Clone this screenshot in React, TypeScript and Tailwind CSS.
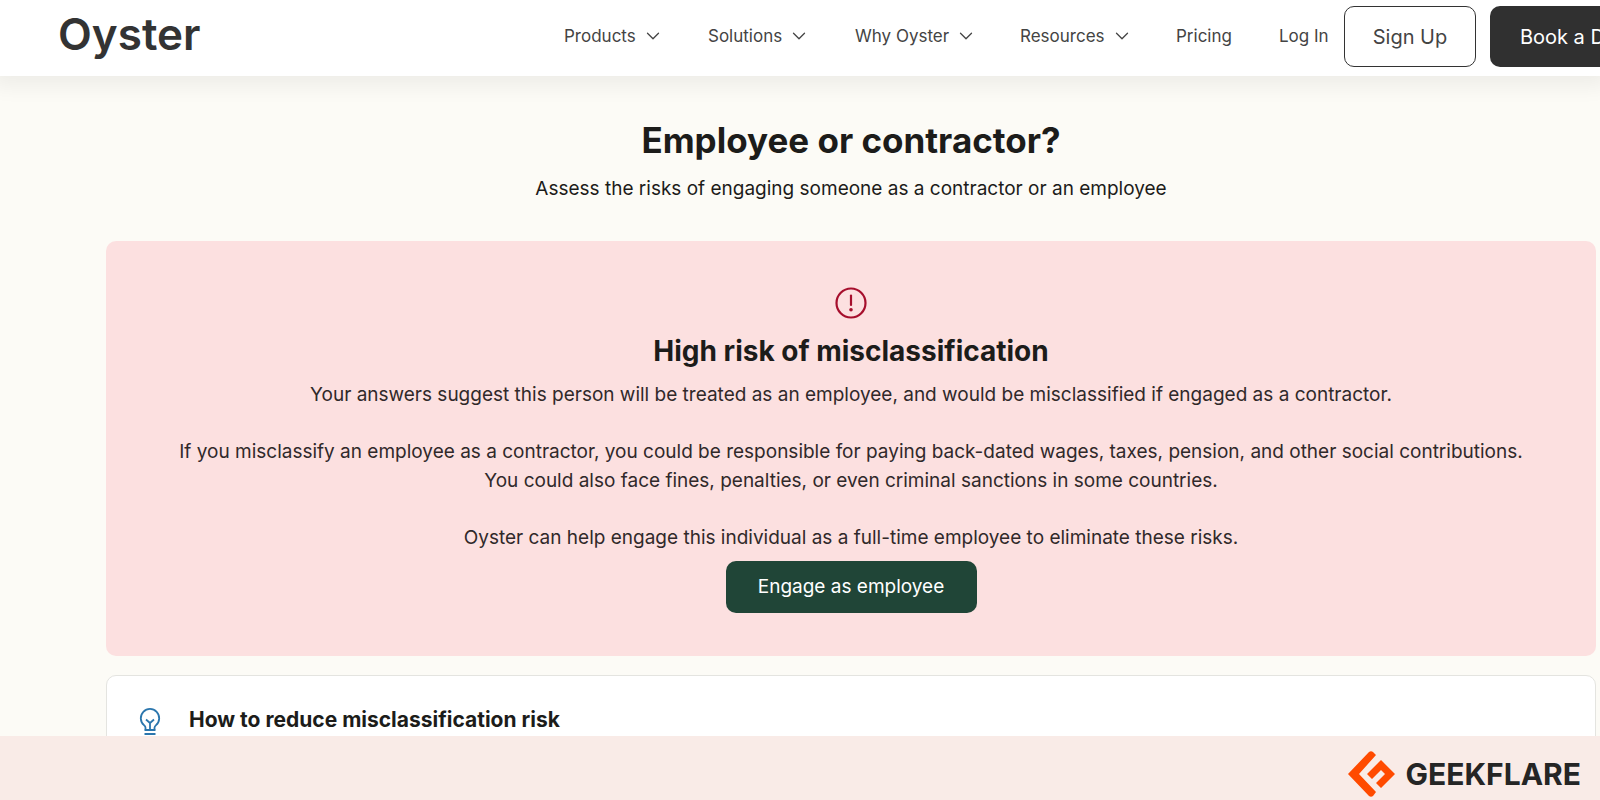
import { ChevronDown } from "lucide-react";

const menus = ["Products", "Solutions", "Why Oyster", "Resources"];

function OysterLogo() {
  return (
    <a href="#" className="w-[506px] shrink-0 text-[44px] leading-[56px] font-semibold text-[#333333]">
      Oyster
    </a>
  );
}

function AlertIcon() {
  return (
    <svg className="size-8" viewBox="0 0 32 32" fill="none" stroke="#a60f2d" strokeWidth="2.2" strokeLinecap="round">
      <circle cx="16" cy="16" r="14.5" />
      <path d="M16 8.5v9.5" />
      <circle cx="16" cy="22.8" r="1.8" fill="#a60f2d" stroke="none" />
    </svg>
  );
}

function BulbIcon() {
  return (
    <svg className="h-7 w-6 shrink-0" viewBox="0 0 24 28" fill="none" stroke="#2b76ad" strokeWidth="1.8">
      <path d="M7.500 21.500v-1.800c0-1.200-.6-1.800-1.500-2.600A9.200 9.200 0 1 1 18 17.100c-.9.800-1.500 1.400-1.500 2.600v1.800" />
      <path d="M12 21.500v-7M12 15l-4-3.500M12 15l4-3.500" />
      <path d="M6.500 22h11M6.500 26h11" />
    </svg>
  );
}

function GeekflareMark() {
  return (
    <svg className="h-[46px] w-[47px] shrink-0" viewBox="0 0 47 46">
      <path d="M21 1Q23 -0.500 25 1L28 4L11 23L28 41L25 45Q23 46.500 21 45L0 23Z" fill="#ff4a00" />
      <path d="M33 9L47 23L33 37L28 32L37 23L33 19L24 28L19 23Z" fill="#ff4a00" />
    </svg>
  );
}

export default function App() {
  return (
    <div className="flex h-screen flex-col overflow-hidden bg-[#fcfbf6] font-['Inter',sans-serif] text-[#1c1c1a]">
      <header className="relative z-10 flex h-[76px] shrink-0 items-start bg-white pt-[6px] pl-[58px] shadow-[0_2px_20px_8px_rgba(0,0,0,0.06)]">
        <OysterLogo />
        <nav className="grid shrink-0 grid-cols-[144px_147px_165px_156px_103px_65px] text-[17px] leading-[60px] text-[#444444]">
          {menus.map((label) => (
            <button key={label} type="button" className="flex items-center gap-[6px]">
              {label}
              <ChevronDown size={22} strokeWidth={1.4} />
            </button>
          ))}
          <a href="#">Pricing</a>
          <a href="#">Log In</a>
        </nav>
        <div className="flex shrink-0 gap-[14px] text-[20px]">
          <button type="button" className="h-[61px] w-[132px] rounded-[10px] border border-[#333333] text-[#444444]">
            Sign Up
          </button>
          <button type="button" className="h-[61px] w-[186px] rounded-[10px] bg-[#303030] text-white">
            Book a Demo
          </button>
        </div>
      </header>

      <main className="min-h-0 flex-1 overflow-hidden pt-[42px] pr-1 pl-[106px] text-center">
        <h1 className="text-[35px] leading-[44px] font-bold">Employee or contractor?</h1>
        <p className="mt-3 text-[19px] leading-[29px]">Assess the risks of engaging someone as a contractor or an employee</p>

        <section className="mt-[38px] flex flex-col items-center rounded-[10px] bg-[#fce0e0] pt-[46px] pb-[43px]">
          <AlertIcon />
          <h2 className="mt-[15px] text-[28px] leading-[34px] font-bold">High risk of misclassification</h2>
          <div className="mt-3 text-[19px] leading-[29px] text-[#30292a]">
            <p>Your answers suggest this person will be treated as an employee, and would be misclassified if engaged as a contractor.</p>
            <p className="mt-7">
              If you misclassify an employee as a contractor, you could be responsible for paying back-dated wages, taxes, pension, and other social contributions.
              <br />
              You could also face fines, penalties, or even criminal sanctions in some countries.
            </p>
            <p className="mt-7">Oyster can help engage this individual as a full-time employee to eliminate these risks.</p>
          </div>
          <button type="button" className="mt-[9px] h-[52px] w-[251px] rounded-[10px] bg-[#204537] text-[19px] text-white">
            Engage as employee
          </button>
        </section>

        <section className="mt-[19px] flex h-40 items-start gap-[27px] rounded-[10px] border border-[#e4e4e0] bg-white pt-8 pl-[31px]">
          <BulbIcon />
          <h3 className="text-[21px] leading-6 font-bold">How to reduce misclassification risk</h3>
        </section>
      </main>

      <footer className="flex h-16 shrink-0 items-center justify-end gap-[11px] bg-[#f9ebe7] pt-3 pr-[19px]">
        <GeekflareMark />
        <span className="text-[30px] leading-8 font-bold text-[#252525]">GEEKFLARE</span>
      </footer>
    </div>
  );
}
